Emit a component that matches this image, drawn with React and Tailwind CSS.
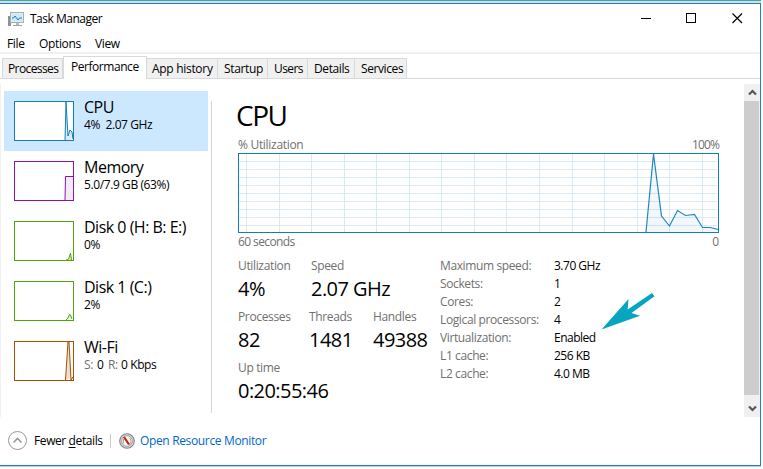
import clsx from "clsx";

const tabs = [
  { name: "Processes", width: "w-[61px]", text: "tracking-[-0.6px] pl-[5px]" },
  { name: "Performance", width: "w-[84px]", text: "tracking-[-0.45px] pl-[7px]", active: true },
  { name: "App history", width: "w-[71px]", text: "tracking-[-0.3px] pl-[5px]" },
  { name: "Startup", width: "w-[50px]", text: "tracking-[-0.35px] pl-[6px]" },
  { name: "Users", width: "w-[40px]", text: "tracking-[-0.6px] pl-[6px]" },
  { name: "Details", width: "w-[47px]", text: "tracking-[-0.4px] pl-[6px]" },
  { name: "Services", width: "w-[52px]", text: "tracking-[-0.4px] pl-[6px]" },
];

const devices = [
  {
    title: "CPU",
    info: "4%  2.07 GHz",
    color: "#117dbb",
    fill: "#dcebf3",
    points: "51,40 52,1 54,35 56,29 58,31 59,38",
    selected: true,
  },
  {
    title: "Memory",
    info: "5.0/7.9 GB (63%)",
    color: "#8b12ae",
    fill: "#f1ecf3",
    points: "51,40 51.5,15.5 60,15.5 60,40",
  },
  {
    title: "Disk 0 (H: B: E:)",
    info: "0%",
    color: "#4da60c",
    fill: "#d3e8c3",
    points: "52,39 54,38.5 55,37 56.5,32 57.5,39",
  },
  {
    title: "Disk 1 (C:)",
    info: "2%",
    color: "#4da60c",
    fill: "#e6f2dc",
    points: "52,39 54,37 55.5,33.5 56.5,34 58,38",
  },
  {
    title: "Wi-Fi",
    color: "#a74f01",
    fill: "#f0dfce",
    points: "51.5,39 54,1 55,1 57,39 59,36",
  },
];

const specs = [
  ["Maximum speed:", "3.70 GHz"],
  ["Sockets:", "1"],
  ["Cores:", "2"],
  ["Logical processors:", "4"],
  ["Virtualization:", "Enabled"],
  ["L1 cache:", "256 KB"],
  ["L2 cache:", "4.0 MB"],
];

const gridX = [8, 41, 73, 106, 138, 171, 203, 236, 268, 301, 334, 366, 399, 431, 464];
const gridY = [8, 16, 24, 32, 40, 48, 56, 64, 72];

function AppIcon() {
  return (
    <svg width="16" height="15" viewBox="0 0 16 15">
      <rect x="0" y="4" width="3" height="10" fill="#8d9499" />
      <rect x="1" y="5" width="1" height="2" fill="#35c433" />
      <rect x="2.5" y="0.5" width="13" height="10" fill="#e9eaeb" stroke="#a9adb0" />
      <rect x="4" y="2" width="10" height="7" fill="#c9e8fa" />
      <path d="M4 6h1.500l1.500-2 3 4 1.500-2H14" fill="none" stroke="#1883c4" />
      <path d="M8 11h3v2H8z" fill="#b6babd" />
      <path d="M5 13h9v1H5z" fill="#a0a4a7" />
    </svg>
  );
}

function GaugeIcon() {
  return (
    <svg width="16" height="16" viewBox="0 0 16 16">
      <circle cx="8" cy="8" r="7.300" fill="#d6d6d6" stroke="#858585" strokeWidth="1.100" />
      <circle cx="8" cy="8" r="5.300" fill="#fafafa" stroke="#8f8f8f" strokeWidth="0.800" />
      <path d="M10 4.500a4.500 4.500 0 0 1 .5 7" fill="none" stroke="#d99a6c" />
      <path d="M4.500 10.500V6" stroke="#aaa" />
      <path d="M5 4l5 7.500" stroke="#c81e0e" strokeWidth="2.200" />
    </svg>
  );
}

function ScrollArrow({ down }) {
  return (
    <svg width="9" height="7" viewBox="0 0 9 7" className={clsx(down && "rotate-180")}>
      <path d="M1 5.500l3.500-3.500L8 5.500" fill="none" stroke="#55594f" strokeWidth="2.200" />
    </svg>
  );
}

function TitleBar() {
  return (
    <div className="flex h-[30px] items-start pl-2">
      <div className="pt-[8px]">
        <AppIcon />
      </div>
      <span className="ml-1.5 mt-[7px] text-[12px] leading-4 tracking-[-0.5px]">Task Manager</span>
      <div className="ml-auto flex pr-[16px] pt-[9px]">
        <svg width="103" height="11" viewBox="0 0 103 11" fill="none" stroke="#000">
          <path d="M0 5.500h10" />
          <rect x="45.500" y="0.500" width="9" height="9" />
          <path d="M91.500 0.500l9.500 9.500M101 0.500l-9.500 9.500" strokeWidth="1.200" />
        </svg>
      </div>
    </div>
  );
}

function Tabs() {
  return (
    <div className="flex h-[25px] items-end border-b border-[#d9d9d9] pl-[2px]">
      {tabs.map((tab) => (
        <div
          key={tab.name}
          className={clsx(
            "shrink-0 whitespace-nowrap border-t border-[#d9d9d9] text-[12px] leading-4",
            tab.width,
            tab.text,
            tab.active
              ? "relative -mb-px h-[23px] border-x bg-white pt-[2px]"
              : "h-5 border-r bg-[#f0f0f0] pt-[2px] first:border-l"
          )}
        >
          {tab.name}
        </div>
      ))}
    </div>
  );
}

function Thumb({ color, fill, points }) {
  return (
    <svg width="60" height="40" viewBox="0 0 60 40" className="shrink-0">
      <rect x="0.500" y="0.500" width="59" height="39" fill="#fff" />
      <polyline points={points} fill={fill} stroke={color} strokeWidth="1" />
      <rect x="0.500" y="0.500" width="59" height="39" fill="none" stroke={color} />
    </svg>
  );
}

function Sidebar() {
  return (
    <div className="w-[204px] shrink-0 pt-[7px]">
      {devices.map((d) => (
        <div
          key={d.title}
          className={clsx("flex h-[60px] gap-2.5 pl-2.5 pt-2.5", d.selected && "bg-[#cce8ff]")}
        >
          <Thumb {...d} />
          <div className="-mt-[4px] whitespace-pre">
            <div className="text-[16px] leading-5 tracking-[-0.5px]">{d.title}</div>
            {d.info ? (
              <div className="text-[12px] leading-4 tracking-[-0.4px]">{d.info}</div>
            ) : (
              <div className="flex text-[12px] leading-4 tracking-[-0.4px]">
                <div className="w-[13px] text-[#707070]">S:</div>
                <div className="w-[11px]">0</div>
                <div className="w-[13px] text-[#707070]">R:</div>
                <div>0 Kbps</div>
              </div>
            )}
          </div>
        </div>
      ))}
    </div>
  );
}

function CpuChart() {
  return (
    <svg width="481" height="80" viewBox="0 0 481 80" className="block">
      <rect width="481" height="80" fill="#fff" />
      {gridX.map((x) => (
        <rect key={x} x={x} y="1" width="1" height="78" fill="#d9eaf4" />
      ))}
      {gridY.map((y) => (
        <rect key={y} x="1" y={y} width="478" height="1" fill="#d9eaf4" />
      ))}
      <polygon
        points="408,79 415.500,1 423.500,63 431.500,73 439.500,57.500 447.500,62.500 456.500,61.500 464.500,74.500 472.500,74.500 480,76.500 480,79"
        fill="#117dbb"
        fillOpacity="0.060"
      />
      <polyline
        points="408,79 415.500,1 423.500,63 431.500,73 439.500,57.500 447.500,62.500 456.500,61.500 464.500,74.500 472.500,74.500 480,76.500"
        fill="none"
        stroke="#2385c0"
        strokeWidth="1.200"
      />
      <rect x="0.500" y="0.500" width="480" height="79" fill="none" stroke="#117dbb" />
    </svg>
  );
}

function Stat({ label, value, className }) {
  return (
    <div className={className}>
      <div className="text-[12px] leading-4 tracking-[-0.35px] text-[#707070]">{label}</div>
      <div className="mt-px text-[20px] leading-[28px] tracking-[-0.55px]">{value}</div>
    </div>
  );
}

function Details() {
  return (
    <div className="w-[481px] whitespace-nowrap">
      <h1 className="-ml-[2px] mt-[12px] h-[41px] text-[28px] leading-[38px] tracking-[-1.5px]">CPU</h1>
      <div className="flex h-[16px] justify-between text-[12px] leading-4 text-[#707070]">
        <span className="tracking-[-0.3px]">% Utilization</span>
        <span className="tracking-[-0.9px]">100%</span>
      </div>
      <CpuChart />
      <div className="flex h-[25px] justify-between text-[12px] leading-[18px] text-[#707070]">
        <span className="tracking-[-0.6px]">60 seconds</span>
        <span>0</span>
      </div>
      <div className="flex">
        <div className="w-[202px] shrink-0">
          <div className="flex h-[51px]">
            <Stat label="Utilization" value="4%" className="w-[73px]" />
            <Stat label="Speed" value="2.07 GHz" />
          </div>
          <div className="flex h-[51px]">
            <Stat label="Processes" value="82" className="w-[71px]" />
            <Stat label="Threads" value="1481" className="w-[64px]" />
            <Stat label="Handles" value="49388" />
          </div>
          <Stat label="Up time" value="0:20:55:46" />
        </div>
        <div className="relative">
          {specs.map(([label, value]) => (
            <div key={label} className="flex h-[18px] text-[12px] leading-4">
              <span className="w-[114px] tracking-[-0.38px] text-[#707070]">{label}</span>
              <span className="tracking-[-0.5px]">{value}</span>
            </div>
          ))}
          {/* callout pointing at the virtualization row */}
          <svg width="54" height="38" viewBox="0 0 54 38" className="absolute left-[161px] top-[34px]">
            <path d="M0.500 37.500L27.500 7l-.8 10.500L51 1l2.500 3.300L30.500 21l8.500 2.800z" fill="#08a5bf" />
          </svg>
        </div>
      </div>
    </div>
  );
}

function Scrollbar() {
  return (
    <div className="ml-auto flex w-4 flex-col bg-[#f0f0f0]">
      <div className="flex h-[17px] items-center justify-center">
        <ScrollArrow />
      </div>
      <div className="mr-px h-[294px] bg-[#cdcdcd]" />
      <div className="flex flex-1 items-center justify-center pt-1">
        <ScrollArrow down />
      </div>
    </div>
  );
}

function Footer() {
  return (
    <div className="flex h-[48px] items-center pl-2 text-[12px] leading-4">
      <svg width="20" height="20" viewBox="0 0 20 20" fill="none">
        <circle cx="9.500" cy="9.500" r="9" stroke="#999" />
        <path d="M5.500 11.500l4-4 4 4" stroke="#999" strokeWidth="1.600" />
      </svg>
      <span className="ml-1.5 w-[76px] tracking-[-0.4px]">
        Fewer <span className="underline underline-offset-2">d</span>etails
      </span>
      <div className="h-[14px] w-px bg-[#c8c8c8]" />
      <div className="ml-2">
        <GaugeIcon />
      </div>
      <span className="ml-[5px] tracking-[-0.35px] text-[#0066cc]">Open Resource Monitor</span>
    </div>
  );
}

export default function App() {
  return (
    <div className="h-[469px] w-[763px] overflow-hidden bg-white font-['Open_Sans',sans-serif] text-black">
      <div className="h-px w-[761px] bg-[#35a9ac]" />
      <div className="h-[2px] w-[761px] bg-[#dcdcdc]" />
      <div className="h-[463px] w-[761px] border-y border-r border-[#1a80d4] bg-white">
        <TitleBar />
        <div className="flex h-5 border-b-2 border-[#f0f0f0] pl-[7px] text-[12px] leading-4 tracking-[-0.35px]">
          <span className="mt-[2px] w-[32px]">File</span>
          <span className="mt-[2px] w-[56px]">Options</span>
          <span className="mt-[2px]">View</span>
        </div>
        <Tabs />
        <div className="mt-[5px] flex h-[333px] border-l border-[#f0f0f0] pl-[3px]">
          <Sidebar />
          <div className="ml-[3px] mr-[26px] mt-[17px] h-[312px] w-px bg-[#d4d4d4]" />
          <Details />
          <Scrollbar />
        </div>
        <Footer />
      </div>
      <div className="h-px w-[761px] bg-[#c8c8c8]" />
    </div>
  );
}
